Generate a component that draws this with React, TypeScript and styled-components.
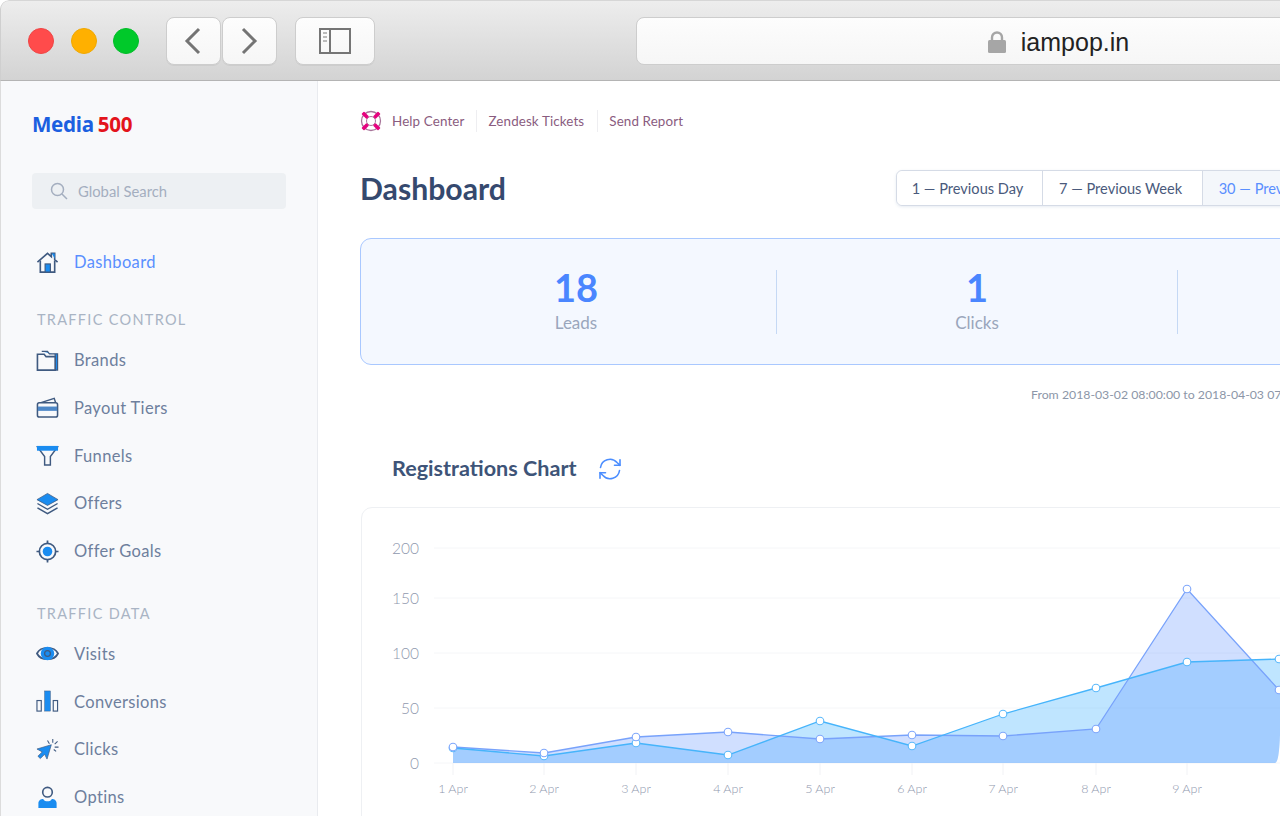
import React from 'react';
import styled, { createGlobalStyle } from 'styled-components';

const Global = createGlobalStyle`
  html, body { margin: 0; padding: 0; background: #fff; overflow: hidden; }
  * { box-sizing: border-box; }
  #root { width: 1280px; height: 816px; overflow: hidden; }
`;

const Window = styled.div`
  width: 1280px; height: 816px; overflow: hidden; display: flex; flex-direction: column;
  font-family: Lato, "Liberation Sans", sans-serif; background: #fff;
  border-radius: 9px 0 0 0;
`;

const Toolbar = styled.header`
  flex: 0 0 81px; display: flex; align-items: center; width: 1280px; padding-left: 27px;
  background: linear-gradient(#ededed, #d3d3d3);
  border-top: 1px solid #d6d6d6; border-left: 1px solid #cfcfcf; border-bottom: 1px solid #b4b4b4;
  border-radius: 9px 0 0 0;
`;
const Light = styled.span<{ $c: string; $b: string }>`
  width: 26px; height: 26px; border-radius: 50%; background: ${p => p.$c}; border: 1px solid ${p => p.$b}; margin-right: 16.5px; flex: none;
`;
const ToolButton = styled.div<{ $w: number; $ml?: number }>`
  flex: none; height: 48px; width: ${p => p.$w}px; margin-left: ${p => p.$ml ?? 0}px;
  display: flex; align-items: center; justify-content: center;
  background: linear-gradient(#fdfdfd, #f6f6f6); border: 1px solid #cdcdcd; border-radius: 8px;
  box-shadow: 0 1px 0 rgba(0,0,0,.05);
`;
const Address = styled.div`
  flex: none; width: 846px; height: 48px; margin-left: 261px; padding-top: 3px; display: flex; align-items: center; justify-content: center; gap: 15px;
  background: linear-gradient(#fdfdfd, #f6f6f6); border: 1px solid #cdcdcd; border-radius: 8px;
  font: 25px "Liberation Sans", Arial, sans-serif; color: #222;
`;

const Body = styled.div` flex: 1; display: flex; min-height: 0; `;
const Sidebar = styled.aside`
  flex: 0 0 318px; background: #f8f9fb; border-right: 1px solid #e9ebef; border-left: 1px solid #dcdcdc; padding: 28px 31px 0 31px;
`;
const Logo = styled.div`
  height: 30px; font: 700 20.6px/30px "Noto Sans", sans-serif; color: #1c5fe0; letter-spacing: -.3px;
  span { color: #e3141c; margin-left: 4px; }
`;
const Search = styled.div`
  margin-top: 34px; height: 36px; background: #edf0f3; border-radius: 4px; display: flex; align-items: center; gap: 10px; padding-left: 18px;
  font-size: 14.8px; color: #a4aebf;
`;
const Item = styled.div<{ $active?: boolean }>`
  height: 47.75px; display: flex; align-items: center; padding-left: 4px; gap: 15px; font-size: 16.5px; letter-spacing: .35px;
  color: ${p => (p.$active ? '#5a8fff' : '#6e7f9d')};
  svg { flex: none; width: 23px; height: 23px; }
`;
const First = styled.div` margin-top: 29.5px; `;
const SectionLabel = styled.div<{ $mt: number; $mb: number }>`
  margin-top: ${p => p.$mt}px; margin-bottom: ${p => p.$mb}px; height: 20px; line-height: 20px; padding-left: 5px;
  font-size: 14.5px; letter-spacing: 1.3px; color: #a9b4c4;
`;

const Main = styled.main` flex: 1; min-width: 0; padding: 28px 0 0 42px; overflow: hidden; `;
const Inner = styled.div` width: 1250px; `;
const Links = styled.nav` height: 24px; display: flex; align-items: center; font-size: 13.4px; letter-spacing: .12px; color: #8a5c80; `;
const LinkItem = styled.span<{ $sep?: boolean; $pr: number }>`
  height: 22px; line-height: 22px; padding: 0 ${p => p.$pr}px 0 ${p => (p.$sep ? 11 : 10)}px; border-left: ${p => (p.$sep ? '1px solid #eeeef1' : 'none')};
`;
const HeadRow = styled.div` margin-top: 37px; display: flex; align-items: center; height: 36px; `;
const Title = styled.h1` margin: 0; flex: 0 0 536px; font-size: 30.2px; font-weight: 700; color: #35496e; `;
const Tabs = styled.div`
  display: flex; height: 36px; border: 1px solid #d5dbe6; border-radius: 6px; box-shadow: 0 1px 3px rgba(90,120,170,.15);
`;
const Tab = styled.div<{ $active?: boolean; $w: number }>`
  flex: 0 0 ${p => p.$w}px; display: flex; align-items: center; justify-content: center; padding-right: 4px; font-size: 14.6px; white-space: nowrap;
  color: ${p => (p.$active ? '#5a8fff' : '#4a5a7c')}; background: ${p => (p.$active ? '#f4f7fb' : '#fff')};
  & + & { border-left: 1px solid #d5dbe6; }
  &:first-child { border-radius: 6px 0 0 6px; }
`;
const Stats = styled.section`
  margin-top: 32px; height: 127px; background: #f4f8ff; border: 1px solid #a9c8ff; border-radius: 11px; display: flex; align-items: center; padding-left: 15px;
`;
const Stat = styled.div`
  flex: 0 0 401px; height: 64px; display: flex; flex-direction: column; align-items: center; border-right: 1px solid #c5d9f5;
`;
const Num = styled.div` margin-top: -3px; font-size: 38px; line-height: 40px; font-weight: 700; color: #4a86ff; `;
const Label = styled.div` margin-top: 4px; font-size: 17px; line-height: 24px; color: #9aa6bc; `;
const Range = styled.div` margin-top: 21px; padding-left: 671px; height: 18px; line-height: 18px; font-size: 12.3px; color: #8c96a8; white-space: nowrap; `;
const ChartHead = styled.div`
  margin-top: 49px; height: 30px; padding-left: 32px; display: flex; align-items: center; gap: 21px;
  svg { margin-top: 2px; }
`;
const ChartTitle = styled.h2` margin: 0; font-size: 21.6px; font-weight: 700; color: #3e5478; `;
const ChartCard = styled.section`
  margin: 24px 0 0 1px; width: 1100px; height: 400px; border: 1px solid #eef0f3; border-radius: 11px; background: #fff;
  svg { display: block; }
  text { font-family: Lato, sans-serif; font-weight: 300; }
`;

const S = '#3f5a80';
const B = '#1a8cf0';
const icons: Record<string, React.ReactNode> = {
  home: <><path d="M1.500 11.500 12 2.500l4 3.400V2.500h3.500v6.500l3 2.500" fill="none" stroke={S} strokeWidth="1.700" /><path d="M16.500 2.500h3v5.500z" fill={B} /><path d="M4.500 10v12h15V10" fill="none" stroke={S} strokeWidth="1.700" /><rect x="9.500" y="13.500" width="5.500" height="8.500" fill={B} stroke={S} strokeWidth="1.200" /></>,
  folder: <><path d="M6 2.500h6l2 2.500h8.500v17H20V5.500" fill={B} stroke={S} strokeWidth="1.300" /><path d="M1.500 5.500h7l2 2.500H20v14H1.500z" fill="#f8f9fb" stroke={S} strokeWidth="1.700" /></>,
  card: <><path d="M2 8 19 2.500 20.500 7" fill="none" stroke={S} strokeWidth="1.500" /><rect x="1.500" y="7" width="21" height="15" rx="2" fill="#f8f9fb" stroke={S} strokeWidth="1.600" /><rect x="2" y="11" width="20" height="4.500" fill="#4d87c7" /></>,
  funnel: <><path d="M1.500 3h21l-7.500 10v9H9v-9z" fill="none" stroke={S} strokeWidth="1.500" /><path d="M1 2h22v5H1z" fill={B} /></>,
  layers: <><path d="M12 1.500 23 8 12 14 1 8z" fill={B} stroke={S} strokeWidth=".8" /><path d="M1.500 12 12 18l10.500-6M1.500 16.500 12 22.500l10.500-6" fill="none" stroke={S} strokeWidth="1.500" /></>,
  target: <><circle cx="12" cy="12" r="8.500" fill="none" stroke={S} strokeWidth="1.800" /><circle cx="12" cy="12" r="5" fill={B} /><path d="M12 .5v3.500M12 20v3.500M.5 12H4M20 12h3.500" stroke={S} strokeWidth="1.800" /></>,
  eye: <><path d="M1 12c4-8 18-8 22 0-4 8-18 8-22 0z" fill="#f8f9fb" stroke={S} strokeWidth="1.800" /><circle cx="12" cy="12" r="7" fill={B} /><circle cx="12" cy="12" r="3" fill="none" stroke={S} strokeWidth="1.300" /></>,
  bars: <><rect x="1" y="11" width="4.500" height="11" fill="#f8f9fb" stroke={S} strokeWidth="1.200" /><rect x="9" y="1" width="6" height="21" fill={B} stroke={S} strokeWidth=".5" /><rect x="18" y="11" width="4.500" height="11" fill="#f8f9fb" stroke={S} strokeWidth="1.200" /></>,
  click: <><path d="M1 11.500 16 7 11.500 22 9 17l-4.500 4.500L2 19l4.500-4.500z" fill={B} stroke={S} strokeWidth=".7" /><path d="M12 2.500 14 6M17.500 1v4M22.500 3.500l-3 3M23.500 9.500h-4M21 14l-2.500-2" stroke={S} strokeWidth="1.100" fill="none" /></>,
  user: <><circle cx="12" cy="6.500" r="5" fill="none" stroke={S} strokeWidth="1.700" /><path d="M2.500 23v-5c0-3 2.500-4.500 5-4.500 1 2 3 2.500 4.500 2.500s3.500-.5 4.500-2.500c2.500 0 5 1.500 5 4.500v5z" fill={B} /></>,
};
const Icon = ({ n }: { n: string }) => <svg viewBox="0 0 24 24">{icons[n]}</svg>;

const xs = [453, 544, 636, 728, 820, 912, 1003, 1096, 1187, 1279];
const A = [747, 753, 737, 732, 739, 735, 736, 729, 589, 690];
const C = [748, 756, 743, 755, 721, 746, 714, 688, 662, 659];
const line = (v: number[]) => v.map((y, i) => `${xs[i]},${y}`).join(' L');
const area = (v: number[]) => `M453,763 L${line(v)} L1280,${v[9] + 1} L1280,735 Q1279,763 1275,763 Z`;
const grid: [string, number][] = [['200', 548], ['150', 598], ['100', 653], ['50', 708], ['0', 763]];

const Chart = () => (
  <svg width="1098" height="320" viewBox="362 508 1098 320">
    {grid.map(([t, y]) => (
      <g key={t}>
        <line x1="434" x2="1400" y1={y} y2={y} stroke="#f5f6f8" strokeWidth="1" />
        <text x="419" y={y + 5.500} textAnchor="end" fontSize="15.500" fill="#8f98ae">{t}</text>
      </g>
    ))}
    {xs.slice(0, 9).map((x, i) => (
      <g key={x}>
        <line x1={x} x2={x} y1="763" y2="775" stroke="#f1f2f5" />
        <text x={x} y="793" textAnchor="middle" fontSize="12.500" fill="#8f98ae">{i + 1} Apr</text>
      </g>
    ))}
    <path d={area(C)} fill="rgb(80,185,255)" fillOpacity=".366" />
    <path d={area(A)} fill="rgb(100,150,255)" fillOpacity=".3" />
    <path d={`M${line(A)}`} fill="none" stroke="#78a2fb" strokeWidth="1.300" />
    <path d={`M${line(C)}`} fill="none" stroke="#46b4fb" strokeWidth="1.300" />
    {C.map((y, i) => <circle key={i} cx={xs[i]} cy={y} r="3.800" fill="#fff" stroke="#5ab8fb" strokeWidth="1.100" />)}
    {A.map((y, i) => <circle key={i} cx={xs[i]} cy={y} r="3.800" fill="#fff" stroke="#7ea6fb" strokeWidth="1.100" />)}
  </svg>
);

export default function App() {
  return (
    <Window>
      <Global />
      <Toolbar>
        <Light $c="#ff4b4b" $b="#ef4444" />
        <Light $c="#ffb000" $b="#f0a800" />
        <Light $c="#00c92a" $b="#00bd28" />
        <ToolButton $w={55} $ml={10}>
          <svg width="18" height="28" viewBox="0 0 18 28"><path d="M15 2 3 14l12 12" fill="none" stroke="#747474" strokeWidth="3" /></svg>
        </ToolButton>
        <ToolButton $w={55} $ml={1}>
          <svg width="18" height="28" viewBox="0 0 18 28"><path d="m3 2 12 12L3 26" fill="none" stroke="#747474" strokeWidth="3" /></svg>
        </ToolButton>
        <ToolButton $w={80} $ml={18}>
          <svg width="32" height="26" viewBox="0 0 32 26"><rect x="1" y="1" width="30" height="24" fill="none" stroke="#757575" strokeWidth="2" /><path d="M11 1v24" stroke="#757575" strokeWidth="2" /><path d="M4 5h4M4 9h4M4 13h4" stroke="#a5a5a5" strokeWidth="1.500" /></svg>
        </ToolButton>
        <Address>
          <svg width="18" height="22" viewBox="0 0 18 22"><path d="M4 10V6.500a5 5 0 0 1 10 0V10" fill="none" stroke="#a6a6a6" strokeWidth="2.400" /><rect y="9" width="18" height="13" rx="1.500" fill="#a6a6a6" /></svg>
          iampop.in
        </Address>
      </Toolbar>
      <Body>
        <Sidebar>
          <Logo>Media<span>500</span></Logo>
          <Search>
            <svg width="18" height="18" viewBox="0 0 18 18"><circle cx="7.500" cy="7.500" r="6" fill="none" stroke="#a4aebf" strokeWidth="1.500" /><path d="m12 12 5 5" stroke="#a4aebf" strokeWidth="1.500" /></svg>
            Global Search
          </Search>
          <First><Item $active><Icon n="home" />Dashboard</Item></First>
          <SectionLabel $mt={23.500} $mb={6.500}>TRAFFIC CONTROL</SectionLabel>
          <Item><Icon n="folder" />Brands</Item>
          <Item><Icon n="card" />Payout Tiers</Item>
          <Item><Icon n="funnel" />Funnels</Item>
          <Item><Icon n="layers" />Offers</Item>
          <Item><Icon n="target" />Offer Goals</Item>
          <SectionLabel $mt={28.500} $mb={6.500}>TRAFFIC DATA</SectionLabel>
          <Item><Icon n="eye" />Visits</Item>
          <Item><Icon n="bars" />Conversions</Item>
          <Item><Icon n="click" />Clicks</Item>
          <Item><Icon n="user" />Optins</Item>
        </Sidebar>
        <Main>
          <Inner>
            <Links>
              <svg width="22" height="22" viewBox="0 0 22 22">
                <circle cx="11" cy="11" r="9.500" fill="none" stroke="#a8759a" strokeWidth="1.300" />
                <circle cx="11" cy="11" r="4.500" fill="#fff" stroke="#a8759a" strokeWidth="1" />
                <path d="M4 2.500 8 6.500 6.500 8l-4-4zM18 2.500l-4 4 1.500 1.500 4-4zM4 19.500l4-4L6.500 14l-4 4zM18 19.500l-4-4 1.500-1.500 4 4z" fill="#e6007e" stroke="#e6007e" strokeWidth="1.500" strokeLinejoin="round" />
              </svg>
              <LinkItem $pr={12}>Help Center</LinkItem>
              <LinkItem $sep $pr={13}>Zendesk Tickets</LinkItem>
              <LinkItem $sep $pr={13}>Send Report</LinkItem>
            </Links>
            <HeadRow>
              <Title>Dashboard</Title>
              <Tabs>
                <Tab $w={145}>1 — Previous Day</Tab>
                <Tab $w={160}>7 — Previous Week</Tab>
                <Tab $w={174} $active>30 — Previous Month</Tab>
              </Tabs>
            </HeadRow>
            <Stats>
              <Stat><Num>18</Num><Label>Leads</Label></Stat>
              <Stat><Num>1</Num><Label>Clicks</Label></Stat>
            </Stats>
            <Range>From 2018-03-02 08:00:00 to 2018-04-03 07:59:59</Range>
            <ChartHead>
              <ChartTitle>Registrations Chart</ChartTitle>
              <svg width="24" height="24" viewBox="0 0 24 24" fill="none" stroke="#4a8dff" strokeWidth="1.600" strokeLinecap="round" strokeLinejoin="round">
                <path d="M2.500 10.500A9.500 9.500 0 0 1 19 5.500l3 2.800" /><path d="M22 2.800v5.500h-5.500" />
                <path d="M21.500 13.500A9.500 9.500 0 0 1 5 18.500l-3-2.800" /><path d="M2 21.200v-5.500h5.500" />
              </svg>
            </ChartHead>
            <ChartCard><Chart /></ChartCard>
          </Inner>
        </Main>
      </Body>
    </Window>
  );
}
